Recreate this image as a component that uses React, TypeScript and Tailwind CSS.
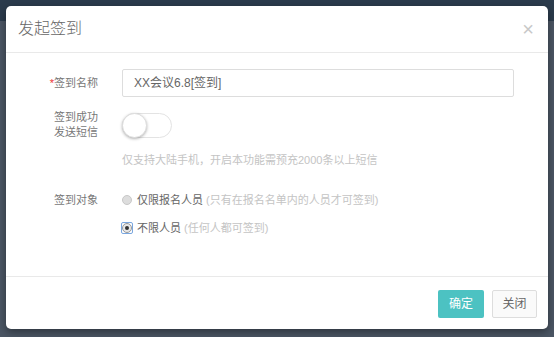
export default function App() {
  return (
    <div
      className="relative w-[554px] h-[337px] overflow-hidden bg-[#4b5664]"
      style={{ fontFamily: '"Liberation Sans", "Noto Sans CJK SC", sans-serif' }}
    >
      <div className="h-[21px] bg-[#2b3b4c]" />

      {/* Modal */}
      <div className="absolute left-[6px] top-[6px] w-[542px] h-[323px] bg-white rounded-[5px] shadow-[0_3px_9px_rgba(0,0,0,0.4)] flex flex-col">
        {/* Header */}
        <div className="h-[47px] flex items-center justify-between pl-[12px] pr-[14px] border-b border-[#e9e9e9]">
          <h1 className="text-[16px] text-[#666] font-light">发起签到</h1>
          <span className="text-[20px] leading-none text-[#c8c8c8]">×</span>
        </div>

        {/* Body */}
        <div className="flex-1 flex flex-col pt-[16px] text-[11px]">
          <div className="flex items-center h-[28px]">
            <div className="w-[92px] text-right text-[#777]">
              <span className="text-[#e33]">*</span>签到名称
            </div>
            <div className="ml-[24px] w-[392px] h-[28px] border border-[#ddd] rounded-[2px] flex items-center px-[11px] text-[12px] text-[#666]">
              XX会议6.8[签到]
            </div>
          </div>

          <div className="flex items-center mt-[13px]">
            <div className="w-[92px] text-right text-[#777] leading-[15px]">
              签到成功
              <br />
              发送短信
            </div>
            <div className="ml-[24px] w-[50px] h-[25px] rounded-full border border-[#e3e3e3] bg-white relative">
              <div className="absolute -left-px -top-px w-[25px] h-[25px] rounded-full bg-white border border-[#ddd] shadow-[0_1px_3px_rgba(0,0,0,0.3)]" />
            </div>
          </div>

          <div className="ml-[116px] mt-[12px] text-[#c4c4c4] leading-[16px]">
            仅支持大陆手机，开启本功能需预充2000条以上短信
          </div>

          <div className="flex mt-[24px]">
            <div className="w-[92px] text-right text-[#777] leading-[16px]">签到对象</div>
            <div className="ml-[24px] flex flex-col gap-[12px]">
              <div className="flex items-center h-[16px]">
                <span className="w-[10px] h-[10px] rounded-full bg-[#ddd] border border-[#c8c8c8]" />
                <span className="ml-[5px] text-[#666]">仅限报名人员</span>
                <span className="ml-[3px] text-[#c4c4c4]">(只有在报名名单内的人员才可签到)</span>
              </div>
              <div className="flex items-center h-[16px]">
                <span className="w-[12px] h-[12px] -ml-px flex items-center justify-center border border-[#7aa7e0] rounded-[2px]">
                  <span className="w-[10px] h-[10px] rounded-full bg-[#e8e8e8] border border-[#999] flex items-center justify-center">
                    <span className="w-[4px] h-[4px] rounded-full bg-[#333]" />
                  </span>
                </span>
                <span className="ml-[4px] text-[#666]">不限人员</span>
                <span className="ml-[3px] text-[#c4c4c4]">(任何人都可签到)</span>
              </div>
            </div>
          </div>
        </div>

        {/* Footer */}
        <div className="h-[53px] border-t border-[#e9e9e9] flex items-start justify-end gap-[8px] pt-[13px] pr-[11px] text-[12px]">
          <button className="w-[46px] h-[28px] rounded-[2px] bg-[#4cc2c2] text-white">确定</button>
          <button className="w-[45px] h-[28px] rounded-[2px] bg-[#fafafa] border border-[#ddd] text-[#666]">关闭</button>
        </div>
      </div>
    </div>
  );
}
